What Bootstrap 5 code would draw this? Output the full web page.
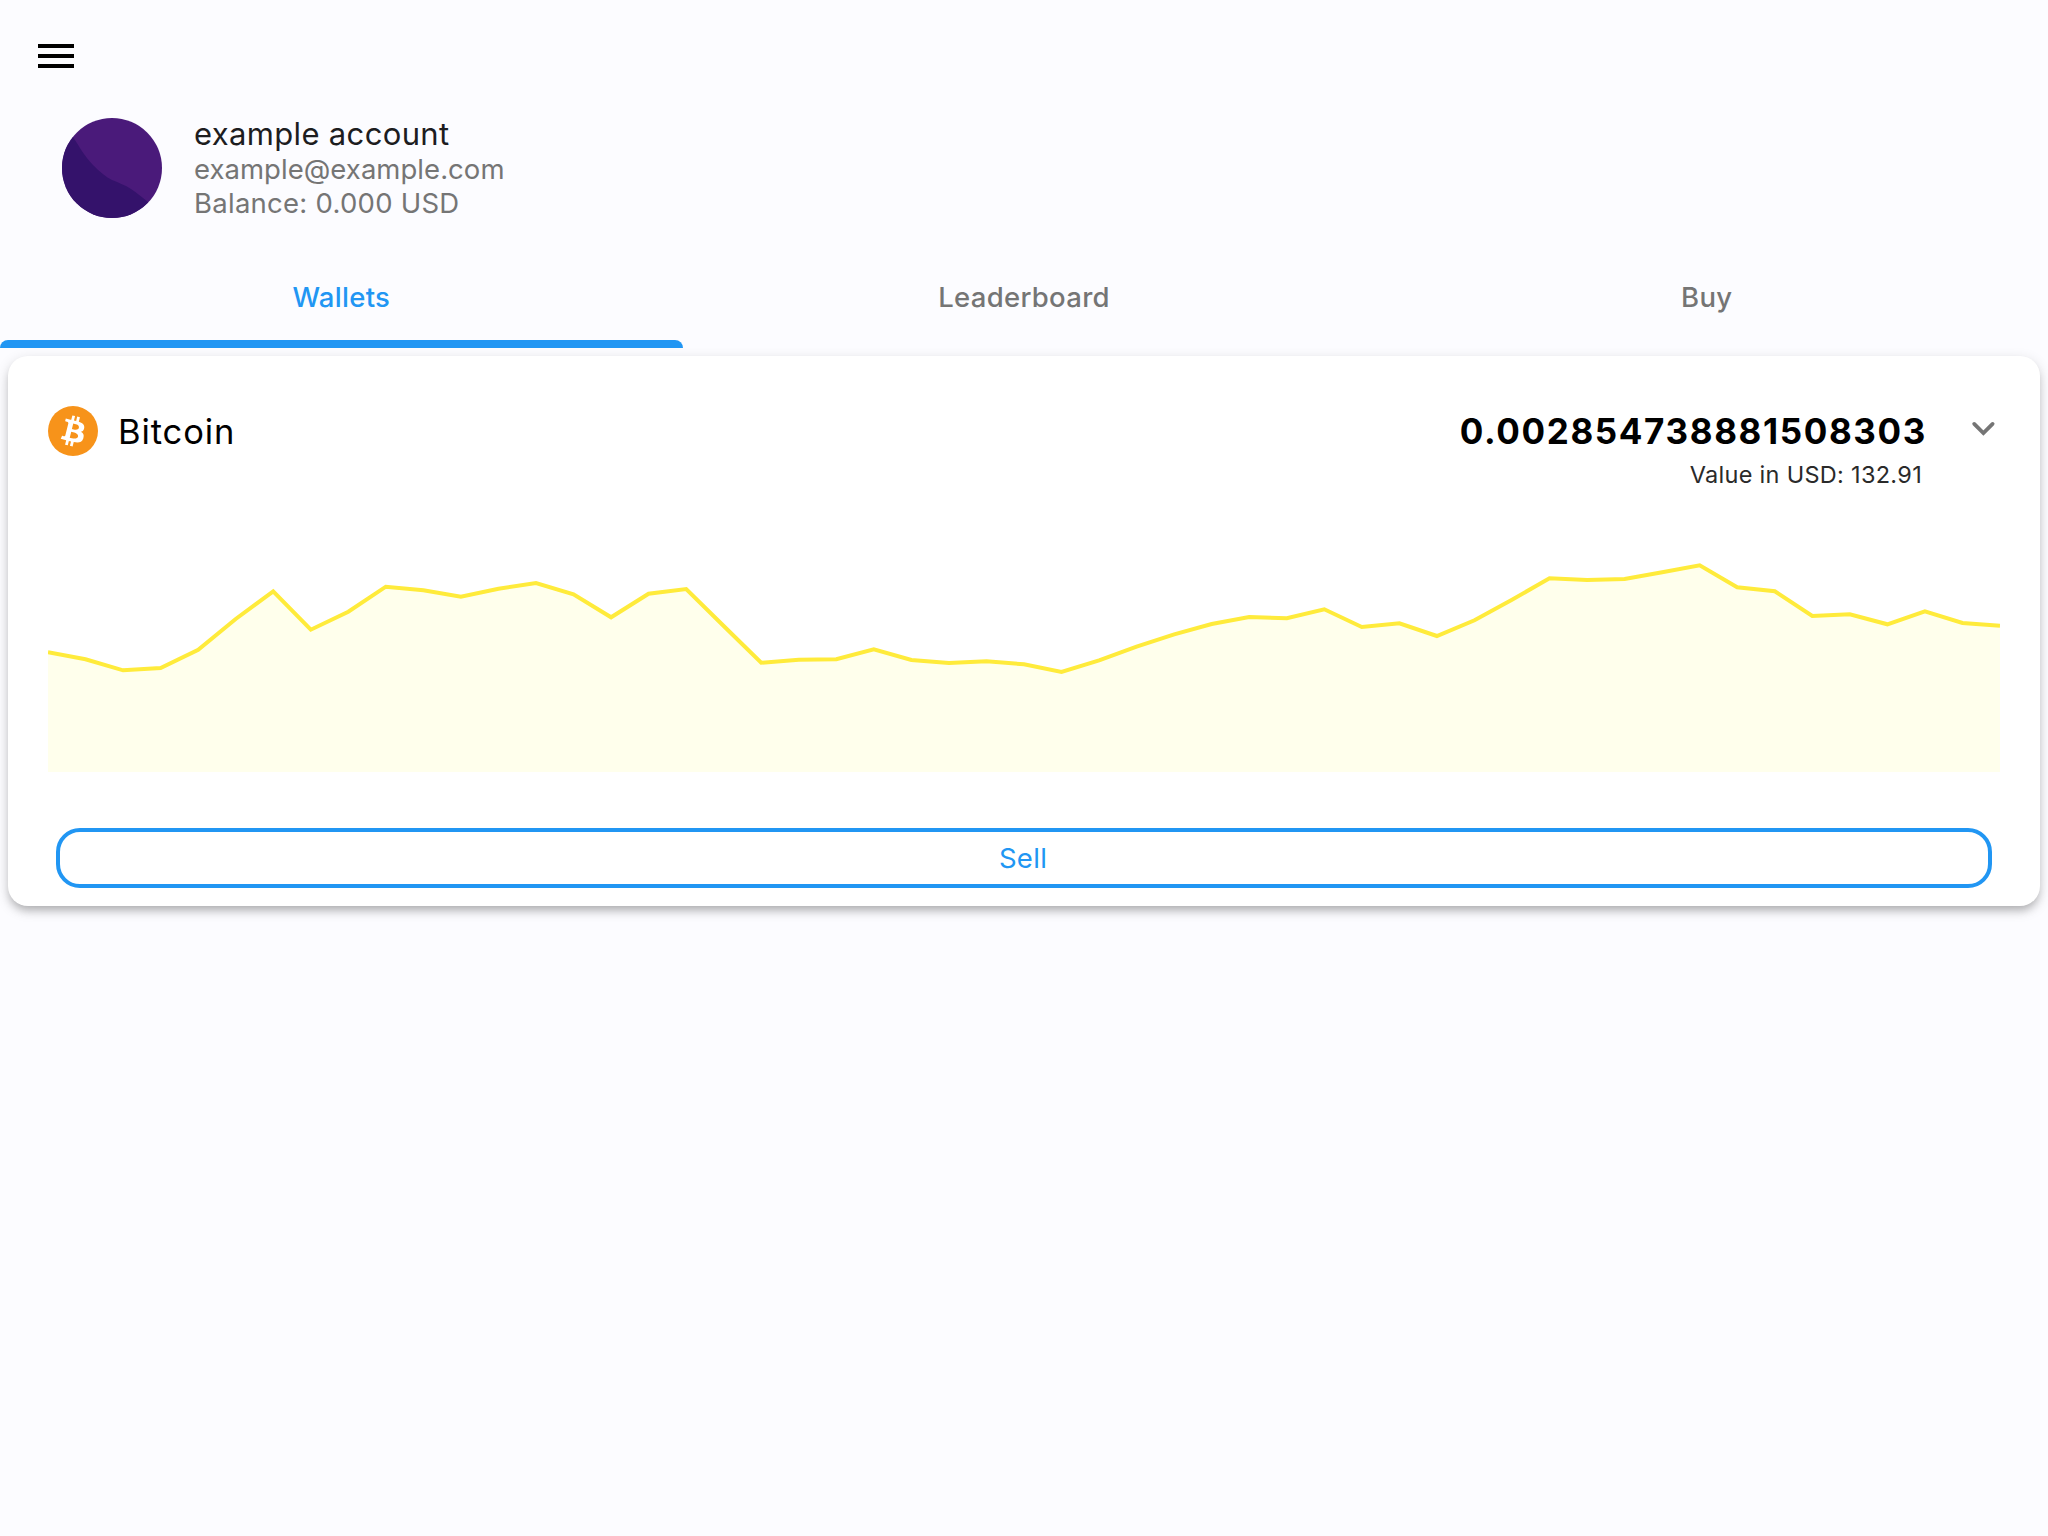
<!DOCTYPE html>
<html lang="en">
<head>
<meta charset="utf-8">
<meta name="viewport" content="width=device-width, initial-scale=1">
<title>Wallets</title>
<link href="https://cdn.jsdelivr.net/npm/bootstrap@5.3.0/dist/css/bootstrap.min.css" rel="stylesheet">
<style>
  body { background: #fcfcff; font-family: Inter, "Liberation Sans", sans-serif; color: #000; }
  .app-bar { height: 118px; padding: 38px 32px 0; }
  .menu-btn { width: 48px; height: 36px; line-height: 0; }
  .profile { height: 136px; padding-left: 62px; gap: 32px; }
  .avatar { width: 100px; height: 100px; }
  .profile-text { margin-top: -2px; color: #757575; font-size: 27.5px; line-height: 34px; }
  .profile-name { font-size: 31px; line-height: 36px; letter-spacing: .34px; color: #1d1d1f; }
  .profile-mail { letter-spacing: .04px; }
  .profile-balance { letter-spacing: .26px; }
  .tabs { height: 94px; }
  .tabs .nav-link { height: 94px; padding: 23px 0 0; color: #757575; font-size: 27.5px; line-height: 40px; font-weight: 500; letter-spacing: .3px; border-radius: 0; }
  .tabs .nav-link.active { color: #2196f3; }
  .tab-line { height: 8px; margin-top: 23px; border-radius: 8px 8px 0 0; }
  .active .tab-line { background: #2196f3; }
  .wallet { margin: 8px 8px 0; padding: 40px 40px 18px; border-radius: 20px; height: 550px;
    box-shadow: 0 6px 8px -2px rgba(0,0,0,.22), 0 4px 14px rgba(0,0,0,.14); }
  .wallet-head { height: 144px; }
  .coin { padding-top: 10px; gap: 20px; }
  .coin-name { padding-top: 1px; font-size: 34.5px; line-height: 49px; letter-spacing: .9px; }
  .amounts { padding-top: 14px; }
  .amount { font-size: 35px; line-height: 42px; font-weight: 700; letter-spacing: 1.63px; }
  .fiat { margin-top: 7px; padding-right: 5px; font-size: 23.5px; line-height: 32px; letter-spacing: .3px; color: #2a2a2a; }
  .chev { margin: 20px 3px 0 42px; }
  .chart { height: 232px; margin-bottom: 56px; }
  .sell { height: 60px; margin: 0 8px; padding: 0 2px 0 0; border: 4px solid #2196f3; border-radius: 24px; color: #2196f3; font-size: 27.5px; line-height: 48px; letter-spacing: .3px; }
</style>
</head>
<body class="min-vh-100">
<header class="app-bar">
  <button class="menu-btn btn p-0 border-0" type="button" aria-label="Menu">
    <svg width="48" height="36" viewBox="0 0 48 36"><path d="M6 6h36v4H6zM6 16h36v4H6zM6 26h36v4H6z"/></svg>
  </button>
</header>

<section class="profile d-flex align-items-start">
  <svg class="avatar rounded-circle flex-shrink-0" viewBox="0 0 100 100">
    <rect width="100" height="100" fill="#4a1a7a"/>
    <path d="M0 3L11 19C17 28 23 39 31 47C38 54 44 59 50 62C57 65 63 67 69 71C75 75 80 79 86 84L100 97V100H0z" fill="#34126b"/>
  </svg>
  <div class="profile-text">
    <div class="profile-name">example account</div>
    <div class="profile-mail">example@example.com</div>
    <div class="profile-balance">Balance: 0.000 USD</div>
  </div>
</section>

<nav class="tabs nav nav-justified flex-nowrap">
  <a class="nav-link active" href="#">Wallets<div class="tab-line"></div></a>
  <a class="nav-link" href="#">Leaderboard<div class="tab-line"></div></a>
  <a class="nav-link" href="#">Buy<div class="tab-line"></div></a>
</nav>

<main class="wallet card border-0 bg-white">
  <div class="wallet-head d-flex justify-content-between align-items-start">
    <div class="coin d-flex align-items-center">
      <svg width="50" height="50" viewBox="0 0 32 32"><circle cx="16" cy="16" r="16" fill="#f7931a"/><path fill="#fff" d="M23.189 14.02c.314-2.096-1.283-3.223-3.465-3.975l.708-2.84-1.728-.43-.69 2.765c-.454-.114-.92-.22-1.385-.326l.695-2.783L15.596 6l-.708 2.839c-.376-.086-.746-.17-1.104-.26l.002-.009-2.384-.595-.46 1.846s1.283.294 1.256.312c.7.175.826.638.805 1.006l-.806 3.235c.048.012.11.03.18.057l-.183-.045-1.13 4.532c-.086.212-.303.531-.793.41.018.025-1.256-.313-1.256-.313l-.858 1.978 2.25.561c.418.105.828.215 1.231.318l-.715 2.872 1.727.43.708-2.84c.472.127.93.245 1.378.357l-.706 2.828 1.728.43.715-2.866c2.948.558 5.164.333 6.097-2.333.752-2.146-.037-3.385-1.588-4.192 1.13-.26 1.98-1.003 2.207-2.538zm-3.95 5.538c-.533 2.147-4.148.986-5.32.695l.95-3.805c1.172.293 4.929.872 4.37 3.11zm.535-5.569c-.487 1.953-3.495.96-4.47.717l.86-3.45c.975.243 4.118.696 3.61 2.733z"/></svg>
      <div class="coin-name">Bitcoin</div>
    </div>
    <div class="d-flex align-items-start">
      <div class="amounts text-end">
        <div class="amount">0.002854738881508303</div>
        <div class="fiat">Value in USD: 132.91</div>
      </div>
      <svg class="chev" width="28" height="24" viewBox="0 0 28 24"><path d="M5.2 7.9L14.4 17L23.6 7.9" fill="none" stroke="#757575" stroke-width="3.8" stroke-linecap="round"/></svg>
    </div>
  </div>

  <svg class="chart w-100" viewBox="0 0 1952 232" preserveAspectRatio="none">
    <path id="area" fill="#ffffec"/>
    <path id="line" fill="none" stroke="#ffeb3b" stroke-width="4" stroke-linejoin="miter"/>
  </svg>

  <button class="sell btn bg-white" type="button">Sell</button>
</main>

<script src="https://cdn.jsdelivr.net/npm/bootstrap@5.3.0/dist/js/bootstrap.bundle.min.js"></script>
<script>
  // Price history, as distances below the top of the plot
  const prices = [112.3,119.3,130.3,128,109.7,79,51.3,89.7,71.7,46.7,50.3,56.7,48.7,43,54.3,77.3,53.7,49,86,122.7,119.7,119.3,109.3,120,123,121.3,124.3,132,120.3,106.7,94.3,84,77,78.3,69.3,87,83.3,96,80.3,59.7,38.3,40,39,32.3,25.3,47.3,51.3,76,74.3,84.3,71.3,83,85.7];
  const step = 1952 / (prices.length - 1);
  const d = prices.map((y, i) => (i ? 'L' : 'M') + (i * step).toFixed(1) + ' ' + y).join('');
  document.getElementById('line').setAttribute('d', d);
  document.getElementById('area').setAttribute('d', d + 'V232H0Z');
</script>
</body>
</html>
